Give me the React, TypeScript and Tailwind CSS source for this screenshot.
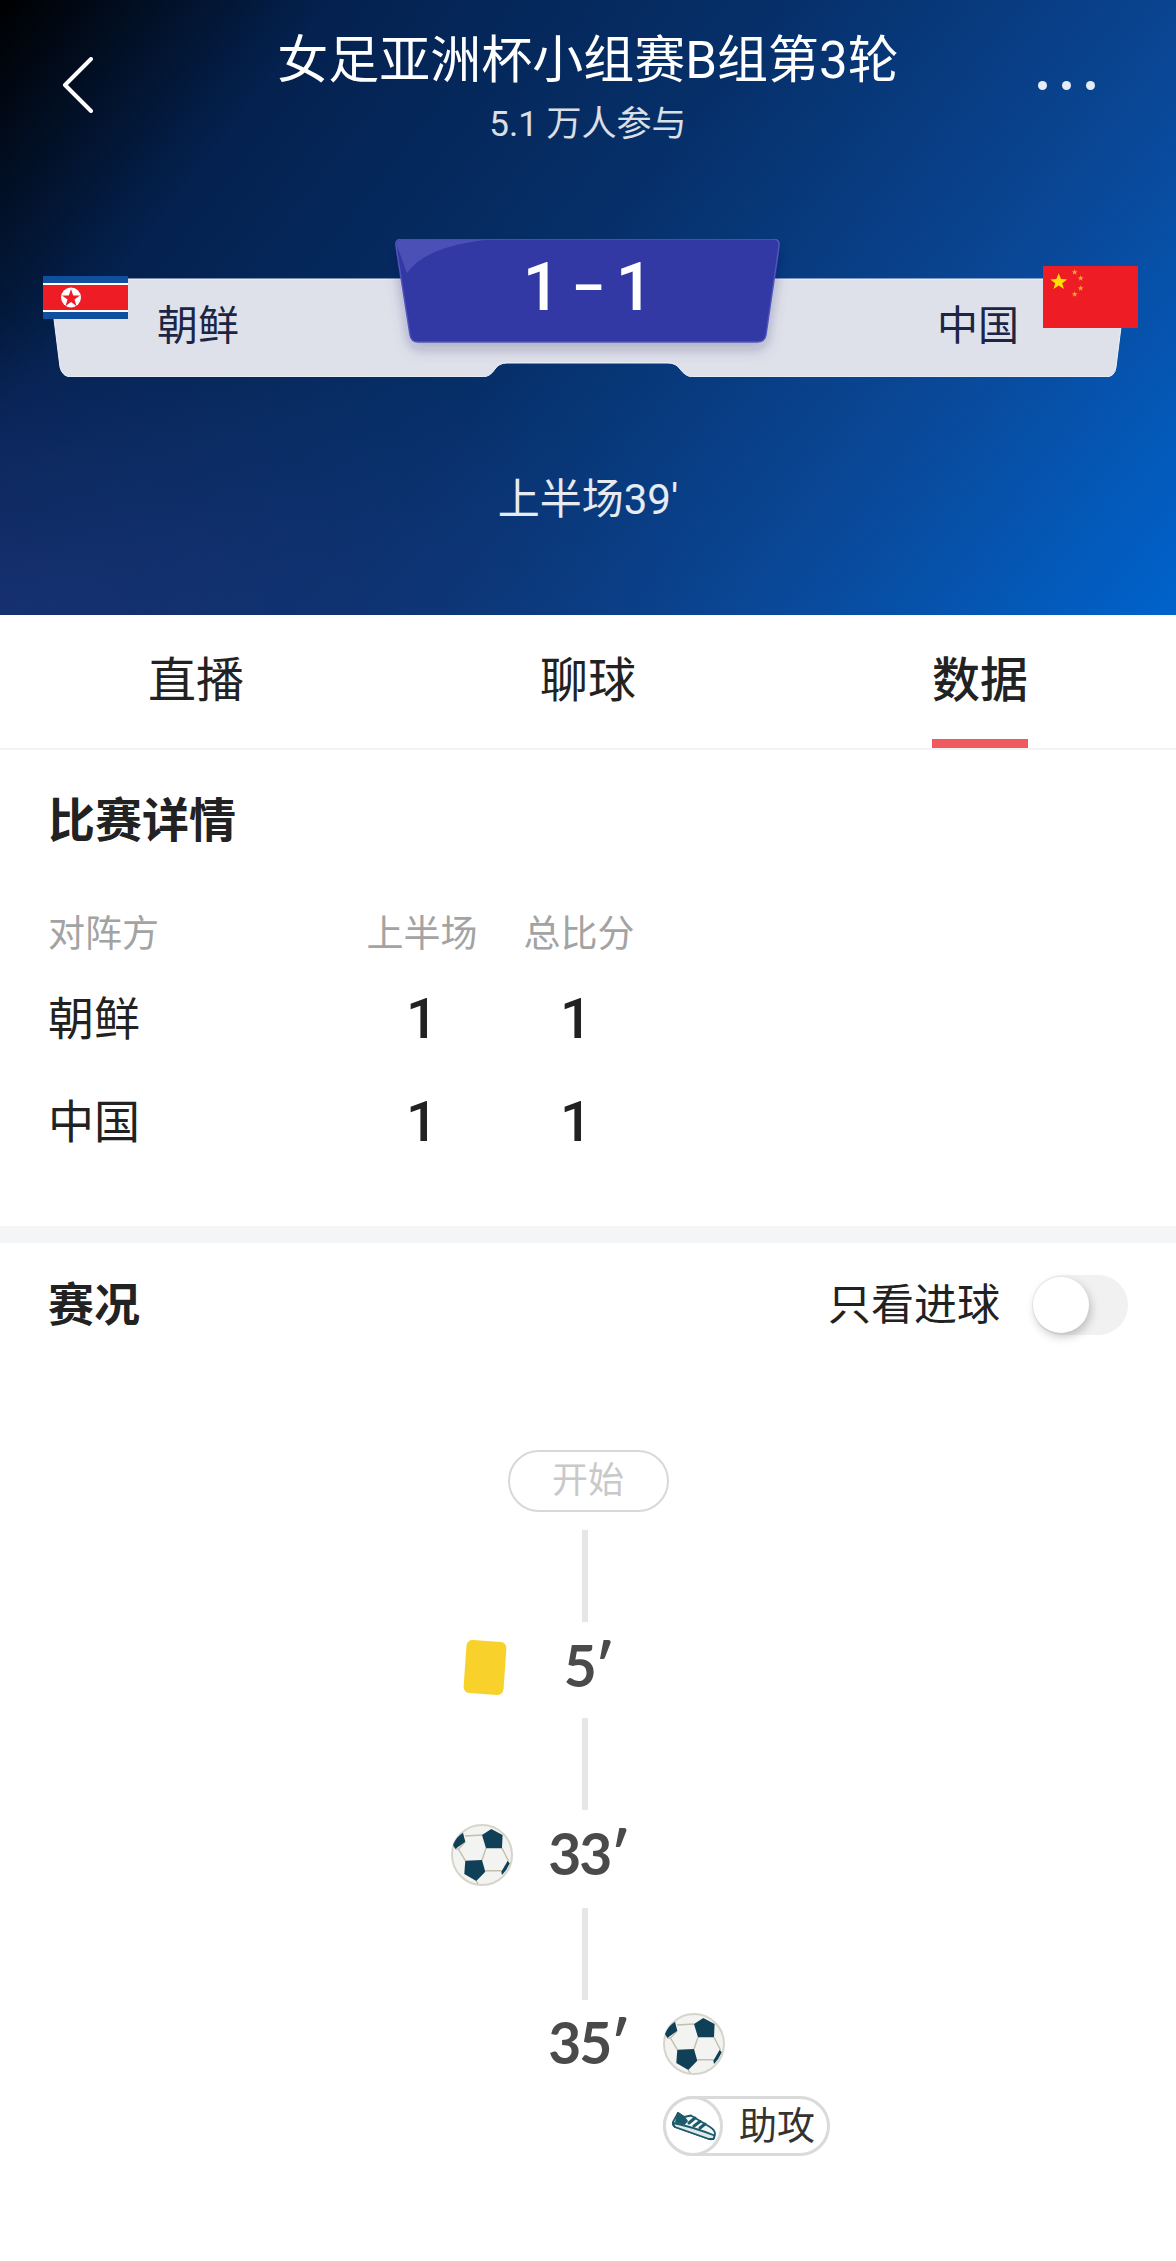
import React from "react";

const sans = "font-['Roboto','Noto_Sans_CJK_SC',sans-serif]";
const star = "M0 -3 L0.8 -1 L2.9 -0.9 L1.2 0.4 L1.8 2.4 L0 1.2 L-1.8 2.4 L-1.2 0.4 L-2.9 -0.9 L-0.8 -1 Z";

function Ball() {
  return (
    <svg width="62" height="62" viewBox="0 0 62 62" className="shrink-0">
      <circle cx="31" cy="31" r="30" fill="#f3f3f1" stroke="#d6d5cc" strokeWidth="2" />
      <g fill="none" stroke="#c4bfa9" strokeWidth="1.4">
        <path d="M14 12 L31 11 M14.300 17.700 L7.500 25 L14.300 36.700 M35 24.300 L31 36 M51 24.300 L57.500 37 M34.300 46.700 L50.500 46.700 M7.500 25 L4.300 25 M25.300 57 L27 60" />
      </g>
      <g fill="#0f4057">
        <path d="M40.300 5 L51.600 11 L51 24.300 L35 24.300 L31 11 Z" />
        <path d="M14.300 36.700 L31 36 L34.300 47.700 L25.300 57 L13.300 50 Z" />
        <path d="M12 8.700 L14.300 17.700 L4.300 25 L2 21 Q5 13 12 8.700 Z" />
        <path d="M56.700 36.700 L58.700 39.300 Q56 46 51 51 L50.300 47.700 Z" />
      </g>
    </svg>
  );
}

function Shoe() {
  return (
    <svg width="60" height="60" viewBox="0 0 60 60">
      <g fill="none" stroke="#1d5a6c" strokeWidth="1.800" strokeLinejoin="round" strokeLinecap="round">
        <path d="M15 17 L21 21 L28 19.500 L47 31 Q52 34 52 38 L51 42 Q49 44 46 43 L12 31 Q9 29 10 26 Z" fill="#f4f8f8" />
        <path d="M10.500 27 Q30 31 51.500 39.500 L50.500 43 L46 43 L12 31 Q10 29 10.500 27 Z" fill="#dfe9ea" />
        <path d="M15 17 L13 26 L21 28 L24 25 L21 21 Z" fill="#1d5a6c" />
        <path d="M26 27 L32 22 M31 30 L37 25.500 M37 32 L42 28" strokeWidth="3" />
      </g>
    </svg>
  );
}

function Line() {
  return <div className="w-[6px] h-[92px] mr-[6px] bg-[#e6e6e6]" />;
}

function Time({ children }: { children: string }) {
  return (
    <div className="text-center text-[57px] leading-[58px] pb-[4px] font-bold text-[#4a4a4a] tracking-[-2px] font-['Lato','Roboto',sans-serif]">
      {children + "′"}
    </div>
  );
}

export default function App() {
  return (
    <div className={`${sans} w-[1176px] h-[2261px] bg-white overflow-hidden`}>
      {/* Header */}
      <header className="h-[615px] text-white bg-[radial-gradient(ellipse_720px_300px_at_0%_100%,rgba(28,52,120,0.75)_0%,rgba(28,52,120,0)_100%),linear-gradient(128deg,#000000_0%,#04214f_20%,#06306a_48%,#0a4796_74%,#0063cc_100%)]">
        <div className="flex pt-[31px]">
          <div className="w-[140px] pl-[62px] pt-[26px]">
            <svg width="32" height="56" viewBox="0 0 32 56" fill="none" stroke="white" strokeWidth="4" strokeLinecap="round" strokeLinejoin="round">
              <path d="M29 2 L3 28 L29 54" />
            </svg>
          </div>
          <div className="flex-1 text-center">
            <div className="text-[51px] leading-[60px]">女足亚洲杯小组赛B组第3轮</div>
            <div className="text-[35px] leading-[44px] mt-[12px] text-white/85">5.1 万人参与</div>
          </div>
          <div className="w-[140px] pt-[50px] pl-[2px] flex gap-[15px] items-start">
            <div className="w-[9px] h-[9px] rounded-full bg-white/90" />
            <div className="w-[9px] h-[9px] rounded-full bg-white/90" />
            <div className="w-[9px] h-[9px] rounded-full bg-white/90" />
          </div>
        </div>

        <div className="relative h-[138px] mt-[92px]">
          <svg className="absolute inset-0" width="1176" height="138" viewBox="0 0 1176 138">
            <defs>
              <filter id="badgeShadow" x="-10%" y="-10%" width="120%" height="140%">
                <feDropShadow dx="0" dy="6" stdDeviation="7" floodColor="#1a1d60" floodOpacity="0.28" />
              </filter>
            </defs>
            <path
              d="M49 40 H1127 L1116 128 Q1115 138 1105 138 H693 Q686 138 680 130 Q676 124 668 124 H507 Q499 124 495 130 Q490 138 482 138 H72 Q62 138 60 128 Z"
              fill="#dfe1ea"
              stroke="#eef4fb"
              strokeWidth="1"
            />
            <path
              d="M402 0 H773 Q780 0 779 7 L766 96 Q765 103 757 103 H418 Q411 103 410 96 L396 7 Q395 0 402 0 Z"
              fill="#3237a4"
              stroke="#5056bc"
              strokeWidth="1.500"
              filter="url(#badgeShadow)"
            />
            <path d="M402 1 H485 Q425 8 407 34 L397 7 Q396 1 402 1 Z" fill="#4a50b6" />
          </svg>

          {/* North Korea flag */}
          <svg className="absolute left-[43px] top-[37px]" width="85" height="43" viewBox="0 0 85 43">
            <rect width="85" height="43" fill="#0f4f9e" />
            <rect y="7" width="85" height="29" fill="#ffffff" />
            <rect y="9" width="85" height="25" fill="#ee1c25" />
            <circle cx="28" cy="21.500" r="10" fill="#ffffff" />
            <path d="M28 13 L30.200 19.500 L37 19.500 L31.500 23.500 L33.500 30 L28 26 L22.500 30 L24.500 23.500 L19 19.500 L25.800 19.500 Z" fill="#ee1c25" />
          </svg>

          {/* China flag */}
          <svg className="absolute left-[1043px] top-[27px]" width="95" height="62" viewBox="0 0 95 62">
            <rect width="95" height="62" fill="#ee1c25" />
            <path transform="translate(15.700 16) scale(2.900)" d={star} fill="#ffe000" />
            <g fill="#f4a62e">
              <path transform="translate(31.700 6.300)" d={star} />
              <path transform="translate(37.700 12.300)" d={star} />
              <path transform="translate(37.700 22.300)" d={star} />
              <path transform="translate(31.700 28.300)" d={star} />
            </g>
          </svg>

          <div className="relative grid grid-cols-[1fr_auto_1fr]">
            <div className="pl-[157px] pt-[62px] text-[41px] leading-[50px] text-[#1c2545]">朝鲜</div>
            <div className="self-start pt-[16px] flex items-center gap-[12px] text-[66px] leading-[66px] font-medium text-white">
              <span>1</span>
              <span className="text-[50px] font-bold">–</span>
              <span>1</span>
            </div>
            <div className="pr-[157px] pt-[62px] text-right text-[41px] leading-[50px] text-[#1c2545]">中国</div>
          </div>
        </div>

        <div className="mt-[98px] text-center text-[42px] leading-[50px] text-white/90">上半场39'</div>
      </header>

      {/* Tabs */}
      <nav className="flex h-[135px] border-b-2 border-[#f3f3f3] text-[#222222] text-[48px] leading-[60px]">
        <div className="flex-1 flex flex-col items-center pt-[36px]">直播</div>
        <div className="flex-1 flex flex-col items-center pt-[36px]">聊球</div>
        <div className="flex-1 flex flex-col items-center justify-between pt-[36px] font-medium">
          <span>数据</span>
          <div className="w-[96px] h-[9px] bg-[#ee5a60]" />
        </div>
      </nav>

      {/* Details */}
      <section className="px-[48px] pt-[41px] pb-[69px] text-[#222222]">
        <h2 className="text-[47px] leading-[60px] font-bold">比赛详情</h2>
        <div className="grid grid-cols-[272px_110px_110px] gap-x-[47px] mt-[59px] text-[37px] leading-[50px] text-[#a3a3a3] whitespace-nowrap">
          <div>对阵方</div>
          <div className="flex justify-center">上半场</div>
          <div className="flex justify-center">总比分</div>
        </div>
        <div className="grid grid-cols-[272px_110px_110px] gap-x-[47px] mt-[24px] text-[46px] leading-[70px]">
          <div>朝鲜</div>
          <div className="text-center text-[56px] font-medium">1</div>
          <div className="text-center text-[56px] font-medium pr-[6px]">1</div>
        </div>
        <div className="grid grid-cols-[272px_110px_110px] gap-x-[47px] mt-[33px] text-[46px] leading-[70px]">
          <div>中国</div>
          <div className="text-center text-[56px] font-medium">1</div>
          <div className="text-center text-[56px] font-medium pr-[6px]">1</div>
        </div>
      </section>

      <div className="h-[17px] bg-[#f4f5f7]" />

      {/* Events */}
      <section className="pt-[32px]">
        <div className="flex items-center justify-between px-[48px] text-[#222222]">
          <h2 className="text-[46px] leading-[60px] font-bold">赛况</h2>
          <div className="flex items-center gap-[32px]">
            <span className="text-[43px] leading-[60px]">只看进球</span>
            <div className="w-[96px] h-[60px] rounded-full bg-[#f1f1f1] flex items-center pl-[1px]">
              <div className="w-[56px] h-[56px] rounded-full bg-white shadow-[2px_4px_10px_rgba(0,0,0,0.22)]" />
            </div>
          </div>
        </div>

        <div className="flex flex-col items-center mt-[115px]">
          <div className="w-[161px] h-[62px] rounded-full border-2 border-[#d8d8d8] flex items-center justify-center text-[36px] text-[#c9c9c9]">
            开始
          </div>
          <div className="mt-[18px]"><Line /></div>

          <div className="grid grid-cols-[1fr_150px_1fr] w-full items-center mt-[14px] mb-[20px]">
            <div className="flex justify-end pr-[8px]">
              <div className="w-[40px] h-[53px] rounded-[6px] bg-[#f8d22a] rotate-[4deg]" />
            </div>
            <Time>5</Time>
            <div />
          </div>
          <Line />

          <div className="grid grid-cols-[1fr_150px_1fr] w-full items-center mt-[14px] mb-[22px]">
            <div className="flex justify-end">
              <Ball />
            </div>
            <Time>33</Time>
            <div />
          </div>
          <Line />

          <div className="grid grid-cols-[1fr_150px_1fr] w-full items-center mt-[13px]">
            <div />
            <Time>35</Time>
            <div className="flex">
              <Ball />
            </div>
            <div />
            <div />
            <div className="mt-[21px] w-[167px] h-[60px] rounded-full border-[3px] border-[#dadada] relative flex items-center pl-[73px] text-[38px] leading-[50px] text-[#333333]">
              <div className="absolute left-[-3px] top-[-3px] w-[60px] h-[60px] rounded-full border-[3px] border-[#dadada] bg-white">
                <div className="-m-[3px]"><Shoe /></div>
              </div>
              助攻
            </div>
          </div>
        </div>
      </section>
    </div>
  );
}
